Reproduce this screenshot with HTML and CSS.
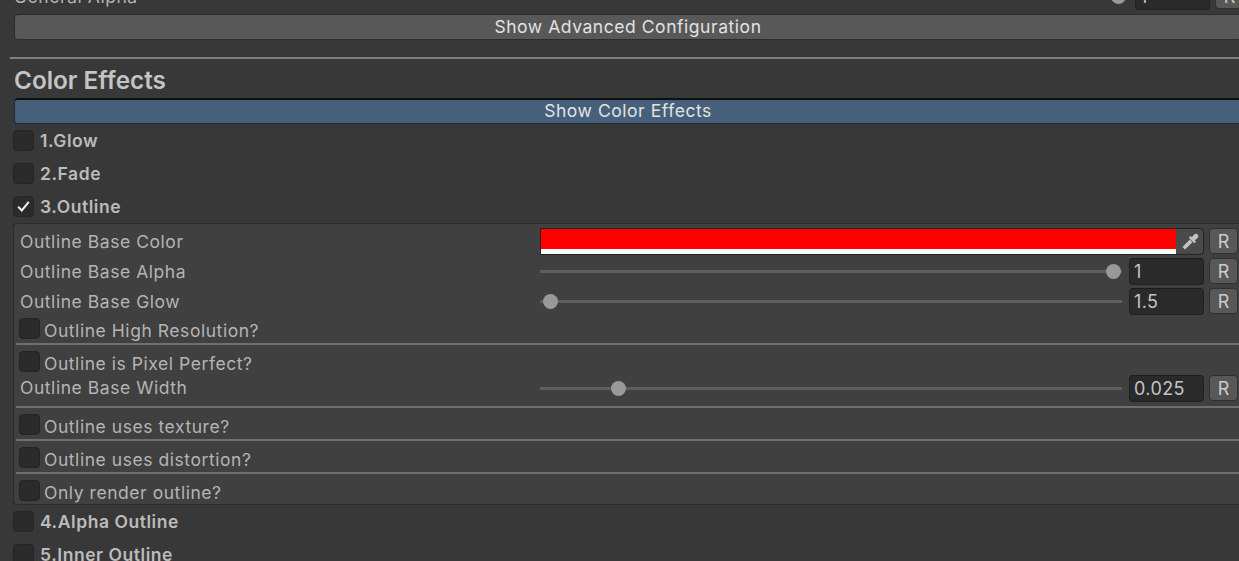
FILE: index.html
```html
<!DOCTYPE html>
<html lang="en">
<head>
<meta charset="utf-8">
<title>Color Effects</title>
<link rel="stylesheet" href="styles.css">
</head>
<body>
<main class="inspector">
  <div class="row general">
    <span class="label">General Alpha</span>
    <div class="controls">
      <div class="slider"><span class="thumb" style="left:98.4%"></span></div>
      <div class="field">1</div>
      <button class="reset">R</button>
    </div>
  </div>
  <button class="wide wide-grey">Show Advanced Configuration</button>
  <hr class="rule">
  <h2 class="heading">Color Effects</h2>
  <button class="wide wide-blue">Show Color Effects</button>

  <div class="effect"><span class="check"></span><span>1.Glow</span></div>
  <div class="effect"><span class="check"></span><span>2.Fade</span></div>
  <div class="effect"><span class="check">
    <svg viewBox="0 0 21 21" width="21" height="21"><path d="M5.2 10.8l3.6 3.7 7-8.6" fill="none" stroke="#eeeeee" stroke-width="2"/></svg>
  </span><span>3.Outline</span></div>

  <section class="panel">
    <div class="row">
      <span class="label">Outline Base Color</span>
      <div class="controls">
        <div class="swatch">
          <div class="color"><div class="red"></div><div class="white"></div></div>
          <div class="picker">
            <svg viewBox="0 0 16 16" width="17" height="17"><path d="M1.6 14.4L8.6 7.4" fill="none" stroke="#c4c4c4" stroke-width="3.4"/><path d="M7.2 3.6l5.2 5.2" fill="none" stroke="#c4c4c4" stroke-width="2.2"/><path d="M9.6 4.4l2-2.4c.9-.9 2-.9 2.7-.2s.7 1.8-.2 2.7l-2.4 2z" fill="#c4c4c4" stroke="#c4c4c4" stroke-width="1"/></svg>
          </div>
        </div>
        <button class="reset">R</button>
      </div>
    </div>
    <div class="row">
      <span class="label">Outline Base Alpha</span>
      <div class="controls">
        <div class="slider"><span class="thumb" style="left:98.55%"></span></div>
        <div class="field">1</div>
        <button class="reset">R</button>
      </div>
    </div>
    <div class="row">
      <span class="label">Outline Base Glow</span>
      <div class="controls">
        <div class="slider"><span class="thumb" style="left:1.85%"></span></div>
        <div class="field">1.5</div>
        <button class="reset">R</button>
      </div>
    </div>
    <div class="toggle"><span class="check"></span><span class="label">Outline High Resolution?</span></div>
    <hr class="rule inner">
    <div class="toggle"><span class="check"></span><span class="label">Outline is Pixel Perfect?</span></div>
    <div class="row width">
      <span class="label">Outline Base Width</span>
      <div class="controls">
        <div class="slider"><span class="thumb" style="left:13.55%"></span></div>
        <div class="field">0.025</div>
        <button class="reset">R</button>
      </div>
    </div>
    <hr class="rule inner">
    <div class="toggle"><span class="check"></span><span class="label">Outline uses texture?</span></div>
    <hr class="rule inner">
    <div class="toggle"><span class="check"></span><span class="label">Outline uses distortion?</span></div>
    <hr class="rule inner">
    <div class="toggle"><span class="check"></span><span class="label">Only render outline?</span></div>
  </section>

  <div class="effect"><span class="check"></span><span>4.Alpha Outline</span></div>
  <div class="effect"><span class="check"></span><span>5.Inner Outline</span></div>
</main>
</body>
</html>
```
FILE: styles.css
```css
html, body {
  margin: 0;
  height: 561px;
  overflow: hidden;
  background: #383838;
}
body {
  font-family: Inter, "Noto Sans", sans-serif;
  color: #b8b8b8;
}
.inspector {
  width: 1247px;
  padding-left: 14px;
  box-sizing: border-box;
  margin-top: -16px;
}
.row {
  display: flex;
  align-items: center;
  justify-content: space-between;
  height: 30px;
}
.label {
  font-size: 17.5px;
  letter-spacing: 0.55px;
  color: #b4b4b4;
  white-space: nowrap;
}
.general {
  height: 24px;
  padding-right: 2px;
}
.controls {
  width: 699px;
  display: flex;
  align-items: center;
  flex: none;
}
.slider {
  position: relative;
  flex: 1;
  height: 3px;
  background: #5e5e5e;
}
.thumb {
  position: absolute;
  top: -6px;
  width: 15px;
  height: 15px;
  margin-left: -7.5px;
  border-radius: 50%;
  background: #999999;
}
.field {
  width: 75px;
  height: 27px;
  box-sizing: border-box;
  margin-left: 7px;
  padding-left: 4px;
  background: #2a2a2a;
  border: 1px solid #212121;
  border-top-color: #1c1c1c;
  border-radius: 4px;
  font-size: 18px;
  line-height: 25px;
  letter-spacing: 0.4px;
  color: #c4c4c4;
}
.reset {
  width: 29px;
  height: 26px;
  margin: 0 1px 0 5px;
  padding: 1px 0 0;
  background: #585858;
  border: 1px solid #303030;
  border-radius: 4px;
  font: 18px Inter, sans-serif;
  color: #cccccc;
}
.wide {
  display: block;
  width: 1228px;
  height: 26px;
  padding: 0 0 2px;
  border-radius: 4px;
  font: 17.5px Inter, sans-serif;
  letter-spacing: 0.55px;
  color: #e2e2e2;
  text-align: center;
}
.wide-grey {
  margin-top: 6px;
  background: #585858;
  border: 1px solid #2c2c2c;
}
.wide-blue {
  background: #46607c;
  border: 1px solid #1f2b38;
  border-top: 2px solid #0f0f0f;
}
.rule {
  height: 2px;
  margin: 17px 0 0 -4px;
  border: 0;
  background: #7f7f7f;
}
.rule.inner {
  margin: 0;
  background: #6f6f6f;
}
.heading {
  margin: 5px 0 0;
  height: 34px;
  font-size: 24.3px;
  line-height: 32px;
  font-weight: 600;
  color: #c4c4c4;
}
.effect {
  display: flex;
  align-items: center;
  gap: 6px;
  height: 33px;
  margin-left: -1px;
  font-size: 17.5px;
  font-weight: 600;
  letter-spacing: 0.55px;
  color: #bcbcbc;
}
.check {
  display: block;
  flex: none;
  width: 21px;
  height: 21px;
  box-sizing: border-box;
  background: #2b2b2b;
  border: 1px solid #242424;
  border-radius: 4px;
}
.check svg {
  display: block;
  margin: -1px;
}
.panel {
  box-sizing: border-box;
  height: 282px;
  margin: 0 0 0 -1px;
  padding: 3px 0 0 2px;
  background: #404040;
  border: 1px solid #2a2a2a;
  border-right: 0;
  border-radius: 4px 0 0 4px;
}
.panel .row {
  padding-left: 4px;
}
.panel .row .label {
  margin-bottom: 2px;
}
.panel .controls {
  margin: 0 8px 2px 0;
}
.panel .width {
  margin: -3px 0 3px;
}
.panel .width .controls {
  margin-bottom: 0;
}
.swatch {
  flex: 1;
  display: flex;
  height: 27px;
  box-sizing: border-box;
  background: #4a4a4a;
  border: 1px solid #232323;
  border-radius: 0 4px 4px 0;
}
.color {
  flex: 1;
  display: flex;
  flex-direction: column;
}
.red {
  flex: 1;
  background: #ff0000;
}
.white {
  height: 5px;
  background: #ffffff;
}
.picker {
  width: 27px;
  display: flex;
  align-items: center;
  justify-content: center;
  padding-left: 2px;
  box-sizing: border-box;
}
.toggle {
  display: flex;
  align-items: center;
  gap: 4px;
  height: 21px;
  padding: 1px 0 4px 3px;
}
.toggle .label {
  position: relative;
  top: 2px;
}
.rule.inner + .toggle {
  padding-top: 6px;
}
```
